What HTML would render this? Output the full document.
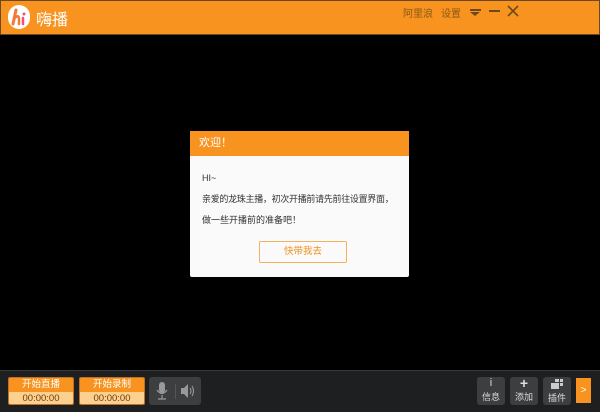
<!DOCTYPE html>
<html><head><meta charset="utf-8"><style>
body{margin:0;width:600px;height:411px;background:#000;position:relative;overflow:hidden;font-family:"Liberation Sans","Noto Sans CJK SC",sans-serif;}
.abs{position:absolute}
#top{left:0;top:0;width:600px;height:35px;background:#f7931e;border:1px solid #6b4a1f;box-sizing:border-box}
#bot{left:0;top:370px;width:600px;height:41px;background:#1e1f20;border-top:1px solid #3a3a3a}
.tb{color:#8a5a1a;font-size:10px;top:5px}
.rec{width:66px;height:28px;border:1px solid #c07020;box-sizing:border-box;border-radius:2px;overflow:hidden;font-size:9.5px;text-align:center}
.rec div:first-child{background:#f7931e;color:#fff;height:14px;line-height:14px}
.rec div:last-child{background:#fcd08e;color:#6b3a10;height:14px;line-height:13px}
.gb{width:28px;height:28px;background:#3d3e40;border-radius:3px;color:#ddd;font-size:9px;text-align:center}
.dl{white-space:nowrap;font-size:9px;height:12px;line-height:12px}
</style></head><body>
<div id="top" class="abs"></div>
<div class="abs" style="left:8px;top:5px;width:22px;height:24px;background:#fff;border-radius:11px"></div>
<svg class="abs" style="left:8px;top:5px" width="22" height="24"><path d="M8 5 L5 19" stroke="#f47a3a" stroke-width="3" fill="none" stroke-linecap="round"/><path d="M6 14 Q10 9 11 13 L11 19" stroke="#f47a3a" stroke-width="2.5" fill="none" stroke-linecap="round"/><path d="M15 13 L15 19" stroke="#ef4f7a" stroke-width="2.5" stroke-linecap="round"/><circle cx="16" cy="9" r="1.5" fill="#ef4f7a"/></svg>
<div class="abs" style="left:36px;top:6px;color:#fff;font-size:16px">嗨播</div>
<div class="abs tb" style="left:403px">阿里浪</div>
<div class="abs tb" style="left:441px">设置</div>
<div class="abs" style="left:470px;top:9px;width:11px;height:2px;background:#6b4a1f"></div>
<div class="abs" style="left:470px;top:12px;width:0;height:0;border-left:5.5px solid transparent;border-right:5.5px solid transparent;border-top:4px solid #6b4a1f"></div>
<div class="abs" style="left:489px;top:10px;width:11px;height:2px;background:#6b4a1f"></div>
<svg class="abs" style="left:507px;top:5px" width="12" height="12"><path d="M1 1 L11 11 M11 1 L1 11" stroke="#6b4a1f" stroke-width="1.6"/></svg>

<div class="abs" style="left:190px;top:131px;width:219px;height:146px;background:#fafafa;border-radius:2px">
<div style="height:25px;background:#f7931e;color:#fff;font-size:11px;line-height:25px;padding-left:9px">欢迎！</div>
<div style="color:#333;padding-left:12px">
<div class="dl" style="margin-top:16px">HI~</div>
<div class="dl" style="margin-top:9px;letter-spacing:-0.3px">亲爱的龙珠主播，初次开播前请先前往设置界面，</div>
<div class="dl" style="margin-top:9px">做一些开播前的准备吧！</div></div>
<div class="abs" style="left:69px;top:110px;width:88px;height:22px;border:1px solid #f5b060;border-radius:2px;box-sizing:border-box;color:#f0901e;font-size:9.5px;text-align:center;line-height:20px">快带我去</div>
</div>

<div id="bot" class="abs"></div>
<div class="abs rec" style="left:8px;top:377px"><div>开始直播</div><div>00:00:00</div></div>
<div class="abs rec" style="left:79px;top:377px"><div>开始录制</div><div>00:00:00</div></div>
<div class="abs" style="left:149px;top:377px;width:52px;height:28px;background:#3d3e40;border-radius:3px"></div>
<svg class="abs" style="left:149px;top:377px" width="52" height="28"><rect x="10" y="5" width="6" height="11" rx="3" fill="#999"/><path d="M8 13 Q13 20 18 13" stroke="#999" fill="none" stroke-width="1.2"/><path d="M13 18 V22 M9 22 H17" stroke="#999" stroke-width="1.2"/><rect x="26" y="7" width="1" height="15" fill="#555"/><path d="M32 11 H35 L39 7 V21 L35 17 H32 Z" fill="#999"/><path d="M41 11 Q43 14 41 17 M43 9 Q46 14 43 19" stroke="#999" fill="none" stroke-width="1.1"/></svg>
<div class="abs gb" style="left:477px;top:377px"><div style="font-size:11px;line-height:13px">i</div><div>信息</div></div>
<div class="abs gb" style="left:510px;top:377px"><div style="font-size:14px;line-height:13px;font-weight:bold">+</div><div>添加</div></div>
<div class="abs gb" style="left:543px;top:377px"><svg width="28" height="13"><rect x="8" y="6" width="8" height="6" fill="#ccc"/><rect x="12" y="2" width="4" height="3" fill="#ccc"/><rect x="17" y="2" width="3" height="3" fill="#ccc"/><rect x="17" y="6" width="3" height="3" fill="#ccc"/></svg><div style="margin-top:-1px">插件</div></div>
<div class="abs" style="left:576px;top:378px;width:15px;height:25px;background:#f7931e;color:#fff;font-size:10px;text-align:center;line-height:25px">&gt;</div>
</body></html>
